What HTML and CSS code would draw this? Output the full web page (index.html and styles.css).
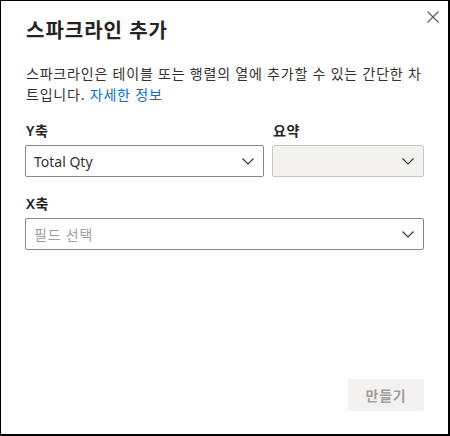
FILE: index.html
```html
<!DOCTYPE html>
<html lang="ko">
<head>
<meta charset="utf-8">
<link rel="stylesheet" href="styles.css">
</head>
<body>
<div class="dialog">
  <button class="close" aria-label="닫기">
    <svg width="12" height="12" viewBox="0 0 12 12"><path d="M0.5 0.5 L11.5 11.5 M11.5 0.5 L0.5 11.5" stroke="#605e5c" stroke-width="1.2" fill="none"/></svg>
  </button>
  <h1 class="title">스파크라인 추가</h1>
  <p class="desc">스파크라인은 테이블 또는 행렬의 열에 추가할 수 있는 간단한 차트입니다. <a class="link" href="#">자세한 정보</a></p>
  <div class="row">
    <div class="field grow">
      <div class="label">Y축</div>
      <div class="select"><span class="value latin">Total Qty</span><svg class="chev" width="12" height="7" viewBox="0 0 12 7"><path d="M0.5 0.5 L6 6 L11.5 0.5" stroke="#323130" stroke-width="1.1" fill="none"/></svg></div>
    </div>
    <div class="field summary">
      <div class="label">요약</div>
      <div class="select disabled"><span class="value"></span><svg class="chev" width="12" height="7" viewBox="0 0 12 7"><path d="M0.5 0.5 L6 6 L11.5 0.5" stroke="#323130" stroke-width="1.1" fill="none"/></svg></div>
    </div>
  </div>
  <div class="field xaxis">
    <div class="label">X축</div>
    <div class="select"><span class="value placeholder">필드 선택</span><svg class="chev" width="12" height="7" viewBox="0 0 12 7"><path d="M0.5 0.5 L6 6 L11.5 0.5" stroke="#323130" stroke-width="1.1" fill="none"/></svg></div>
  </div>
  <div class="spacer"></div>
  <div class="footer">
    <button class="primary" disabled>만들기</button>
  </div>
</div>
</body>
</html>
```
FILE: styles.css
```css
* { box-sizing: border-box; }
html, body { margin: 0; padding: 0; background: #fff; }
body {
  font-family: "Noto Sans", "Noto Sans CJK KR", sans-serif;
  color: #323130;
}
.dialog {
  position: relative;
  width: 450px;
  height: 436px;
  border: 1px solid #000;
  border-right-width: 2px;
  border-bottom-width: 2px;
  padding: 0 24px 0 24px;
  display: flex;
  flex-direction: column;
  background: #fff;
}
.close {
  position: absolute;
  top: 9px;
  right: 8px;
  width: 14px;
  height: 14px;
  padding: 0;
  border: 0;
  background: none;
  display: flex;
  align-items: center;
  justify-content: center;
}
.title {
  margin: 15px 0 0 1px;
  font-size: 20px;
  font-weight: 600;
  line-height: 30px;
  letter-spacing: 1px;
  color: #252423;
}
.desc {
  margin: 17px 0 0 1px;
  font-size: 14px;
  line-height: 21px;
  letter-spacing: 0.8px;
  color: #323130;
}
.link { color: #106ebe; text-decoration: none; }
.row {
  display: flex;
  gap: 8px;
  margin-top: 16px;
}
.grow { flex: 1; }
.summary { width: 152px; }
.label {
  font-size: 14px;
  font-weight: 600;
  line-height: 20px;
  letter-spacing: 0.5px;
  margin: 0 0 4px 1px;
  color: #252423;
}
.select {
  height: 32px;
  border: 1px solid #8a8886;
  border-radius: 2px;
  display: flex;
  align-items: center;
  padding: 0 8px 0 8px;
  font-size: 14px;
}
.select .value { flex: 1; color: #323130; letter-spacing: 0.8px; }
.select .latin { letter-spacing: 0; }
.select .placeholder { color: #a19f9d; }
.select.disabled { background: #f3f2f1; border-color: #c8c6c4; }
.chev { flex: none; margin-right: 1px; }
.xaxis { margin-top: 17px; }
.spacer { flex: 1; }
.footer {
  display: flex;
  justify-content: flex-end;
  padding-bottom: 23px;
}
.primary {
  width: 76px;
  height: 32px;
  border: 0;
  border-radius: 2px;
  background: #f3f2f1;
  color: #a19f9d;
  font-family: "Noto Sans CJK KR", sans-serif;
  font-size: 14px;
  font-weight: 600;
  letter-spacing: 0.8px;
}
```
